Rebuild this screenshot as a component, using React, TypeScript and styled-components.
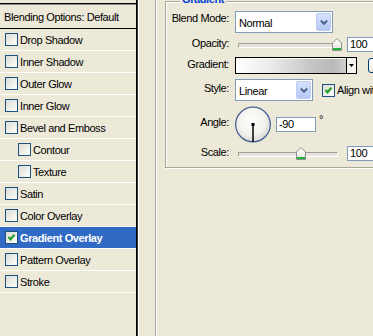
import React from "react";
import styled, { createGlobalStyle } from "styled-components";

const GlobalStyle = createGlobalStyle`
  html, body {
    margin: 0;
    padding: 0;
    background: #ece9d8;
  }
  body {
    font-family: "Liberation Sans", Arial, sans-serif;
    font-size: 11px;
    color: #000;
  }
`;

const Window = styled.div`
  display: flex;
  width: 373px;
  height: 336px;
  overflow: hidden;
  background: #ece9d8;
  letter-spacing: -0.4px;
`;

// ---- left: layer style list ----

const StylesPanel = styled.div`
  width: 136px;
  flex: none;
  border-right: 1px solid #000;
  box-shadow: 1px 0 0 #3a3a3a, 2px 0 0 #fff;
`;

const StyleList = styled.div`
  margin-top: 3px;
  border-top: 1px solid #000;
`;

const ListHeader = styled.div`
  height: 23px;
  border-top: 1px solid #8c8a80;
  border-bottom: 1px solid #000;
  display: flex;
  align-items: center;
  padding-left: 4px;
`;

const ListItem = styled.div<{ $indent?: boolean; $selected?: boolean }>`
  height: 21px;
  border-bottom: 1px solid #fff;
  display: flex;
  align-items: center;
  gap: 2px;
  padding-left: ${(p) => (p.$indent ? 18 : 5)}px;
  background: ${(p) => (p.$selected ? "#316ac5" : "transparent")};
  color: ${(p) => (p.$selected ? "#fff" : "#000")};
  font-weight: ${(p) => (p.$selected ? 700 : 400)};
`;

const Box = styled.span`
  width: 13px;
  height: 13px;
  box-sizing: border-box;
  flex: none;
  border: 1px solid #1c5180;
  background: linear-gradient(135deg, #dcdcd5 0%, #f4f4f0 70%, #fff 100%);
  display: flex;
`;

const CheckBox = ({ checked }: { checked?: boolean }) => (
  <Box>
    {checked && (
      <svg width="11" height="11" viewBox="0 0 11 11">
        <polyline
          points="2.5,5 4.5,7.3 8.5,2.6"
          fill="none"
          stroke="#21a121"
          strokeWidth="2.2"
        />
      </svg>
    )}
  </Box>
);

// ---- right: gradient overlay options ----

const OptionsArea = styled.div`
  flex: 1;
  display: flex;
  padding-left: 18px;
`;

const Frame = styled.div`
  flex: 1;
  display: flex;
  align-items: flex-start;
  border-left: 1px solid #aca899;
  box-shadow: inset 1px 0 0 #fff;
  padding-left: 9px;
`;

const GroupBox = styled.div`
  flex: none;
  width: 280px;
  margin-top: 1px;
  padding-bottom: 6px;
  border: 1px solid #aca899;
  box-shadow: 1px 1px 0 #fff, inset 1px 1px 0 #fff;
`;

const Legend = styled.div`
  width: fit-content;
  margin: -9px 0 0 14px;
  padding: 0 2px;
  line-height: 13px;
  font-weight: 700;
  color: #0046d5;
  background: #ece9d8;
`;

const Row = styled.div<{ $h: number; $mt: number }>`
  display: flex;
  align-items: center;
  height: ${(p) => p.$h}px;
  margin-top: ${(p) => p.$mt}px;
`;

const Label = styled.span<{ $raise?: number }>`
  width: 63px;
  flex: none;
  text-align: right;
  margin-right: 6px;
  margin-bottom: ${(p) => p.$raise ?? 4}px;
  white-space: nowrap;
`;

const SelectBox = styled.div<{ $w: number }>`
  width: ${(p) => p.$w}px;
  height: 22px;
  box-sizing: border-box;
  flex: none;
  border: 1px solid #7f9db9;
  background: #fff;
  padding: 1px;
  display: flex;
  align-items: center;
`;

const SelectText = styled.span`
  flex: 1;
  padding-left: 2px;
  padding-top: 1px;
`;

const SelectButton = styled.span`
  width: 15px;
  align-self: stretch;
  box-sizing: border-box;
  border: 1px solid #bccbf2;
  border-radius: 2px;
  background: linear-gradient(#d6e1fd, #b4c8f6);
  display: flex;
  align-items: center;
  justify-content: center;
`;

const Select = ({ value, width }: { value: string; width: number }) => (
  <SelectBox $w={width}>
    <SelectText>{value}</SelectText>
    <SelectButton>
      <svg width="8" height="5" viewBox="0 0 8 5">
        <path d="M0.8 0.6 L4 3.8 L7.2 0.6" fill="none" stroke="#4d6185" strokeWidth="2" />
      </svg>
    </SelectButton>
  </SelectBox>
);

const SliderBox = styled.div<{ $w: number }>`
  position: relative;
  width: ${(p) => p.$w}px;
  height: 13px;
  flex: none;
  margin-left: 3px;
`;

const Track = styled.div`
  height: 3px;
  margin-top: 5px;
  border-top: 1px solid #a19f96;
  border-left: 1px solid #a19f96;
  border-bottom: 1px solid #fff;
  border-right: 1px solid #fff;
  border-radius: 1px;
  background: #e4e2da;
`;

const Thumb = styled.svg`
  position: absolute;
  top: 0;
`;

const Slider = ({
  width,
  value,
  min,
  max,
}: {
  width: number;
  value: number;
  min: number;
  max: number;
}) => {
  const left = ((value - min) / (max - min)) * (width - 10);
  return (
    <SliderBox $w={width}>
      <Track />
      <Thumb width="10" height="13" viewBox="0 0 10 13" style={{ left }}>
        <defs>
          <linearGradient id="thumbFill" x1="0" y1="0" x2="0" y2="1">
            <stop offset="0" stopColor="#ffffff" />
            <stop offset="1" stopColor="#e3e3dc" />
          </linearGradient>
        </defs>
        <path d="M5 0.5 L9.5 5 V12.5 H0.5 V5 Z" fill="url(#thumbFill)" stroke="#8e8f8f" />
        <rect x="1" y="10" width="8" height="2" fill="#21b33c" />
      </Thumb>
    </SliderBox>
  );
};

const NumberField = styled.div<{ $w: number; $ml: number }>`
  width: ${(p) => p.$w}px;
  height: 15px;
  box-sizing: border-box;
  flex: none;
  margin-left: ${(p) => p.$ml}px;
  border: 1px solid #7f9db9;
  background: #fff;
  padding-left: 2px;
  line-height: 13px;
`;

const GradientPicker = styled.div`
  width: 122px;
  height: 17px;
  box-sizing: border-box;
  flex: none;
  display: flex;
  border: 1px solid #000;
`;

const GradientSwatch = styled.div`
  flex: 1;
  border-right: 1px solid #000;
  box-shadow: inset 1px 1px 0 #fff;
  background: linear-gradient(
    to right,
    #ffffff 0%,
    #ececec 30%,
    #c4c4c4 70%,
    #b9b9b9 88%,
    #cfcfcf 100%
  );
`;

const GradientArrow = styled.div`
  width: 9px;
  background: #f4f3ee;
  display: flex;
  align-items: center;
  justify-content: center;
`;

const PushButton = styled.div`
  width: 90px;
  height: 15px;
  box-sizing: border-box;
  flex: none;
  margin-left: 11px;
  border: 1px solid #003c74;
  border-radius: 3px;
  background: linear-gradient(#ffffff, #eceae3);
  text-align: center;
  line-height: 13px;
`;

const AlignCheck = styled.label`
  display: flex;
  align-items: center;
  gap: 2px;
  margin-left: 9px;
  white-space: nowrap;
`;

const Dial = styled.svg`
  flex: none;
`;

const Degree = styled.span`
  margin-left: 3px;
  margin-bottom: 10px;
`;

const styles = [
  { name: "Drop Shadow" },
  { name: "Inner Shadow" },
  { name: "Outer Glow" },
  { name: "Inner Glow" },
  { name: "Bevel and Emboss" },
  { name: "Contour", indent: true },
  { name: "Texture", indent: true },
  { name: "Satin" },
  { name: "Color Overlay" },
  { name: "Gradient Overlay", checked: true, selected: true },
  { name: "Pattern Overlay" },
  { name: "Stroke" },
];

export default function App() {
  return (
    <>
      <GlobalStyle />
      <Window>
        <StylesPanel>
          <StyleList>
            <ListHeader>Blending Options: Default</ListHeader>
            {styles.map((s) => (
              <ListItem key={s.name} $indent={s.indent} $selected={s.selected}>
                <CheckBox checked={s.checked} />
                <span>{s.name}</span>
              </ListItem>
            ))}
          </StyleList>
        </StylesPanel>

        <OptionsArea>
          <Frame>
            <GroupBox>
              <Legend>Gradient</Legend>

              <Row $h={22} $mt={5}>
                <Label $raise={8}>Blend Mode:</Label>
                <Select value="Normal" width={98} />
              </Row>

              <Row $h={15} $mt={4}>
                <Label>Opacity:</Label>
                <Slider width={104} value={100} min={0} max={100} />
                <NumberField $w={40} $ml={5}>100</NumberField>
              </Row>

              <Row $h={17} $mt={5}>
                <Label>Gradient:</Label>
                <GradientPicker>
                  <GradientSwatch />
                  <GradientArrow>
                    <svg width="5" height="3" viewBox="0 0 5 3">
                      <path d="M0 0 H5 L2.5 3 Z" fill="#000" />
                    </svg>
                  </GradientArrow>
                </GradientPicker>
                <PushButton>New...</PushButton>
              </Row>

              <Row $h={22} $mt={5}>
                <Label>Style:</Label>
                <Select value="Linear" width={78} />
                <AlignCheck>
                  <CheckBox checked />
                  <span>Align with Layer</span>
                </AlignCheck>
              </Row>

              <Row $h={36} $mt={5}>
                <Label>Angle:</Label>
                <Dial width="37" height="37" viewBox="0 0 37 37">
                  <defs>
                    <radialGradient id="dialFill" cx="0.45" cy="0.4" r="0.6">
                      <stop offset="0" stopColor="#ffffff" />
                      <stop offset="0.7" stopColor="#f1f1ec" />
                      <stop offset="1" stopColor="#d6d6cf" />
                    </radialGradient>
                  </defs>
                  <circle cx="18" cy="18.5" r="17.3" fill="url(#dialFill)" stroke="#4a6296" strokeWidth="1.3" />
                  <line x1="18" y1="18.5" x2="18" y2="36" stroke="#000" strokeWidth="1.5" />
                  <rect x="16.5" y="17" width="3" height="3" fill="#000" />
                </Dial>
                <NumberField $w={40} $ml={4}>-90</NumberField>
                <Degree>°</Degree>
              </Row>

              <Row $h={15} $mt={4}>
                <Label>Scale:</Label>
                <Slider width={100} value={100} min={10} max={150} />
                <NumberField $w={40} $ml={9}>100</NumberField>
              </Row>
            </GroupBox>
          </Frame>
        </OptionsArea>
      </Window>
    </>
  );
}
